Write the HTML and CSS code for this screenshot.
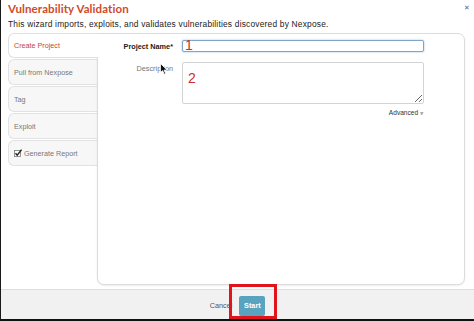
FILE: index.html
```html
<!DOCTYPE html>
<html lang="en">
<head>
<meta charset="UTF-8">
<meta name="viewport" content="width=device-width, initial-scale=1.0">
<title>Vulnerability Validation</title>
<link rel="stylesheet" href="styles.css">
</head>
<body>
    <div class="dialog">
        <div class="header">
            <h1 class="title">Vulnerability Validation</h1>
            <span class="close">&#x2715;</span>
            <p class="subtitle">This wizard imports, exploits, and validates vulnerabilities discovered by Nexpose.</p>
        </div>

        <div class="wizard">
            <ul class="steps">
                <li class="step active">Create Project</li>
                <li class="step">Pull from Nexpose</li>
                <li class="step">Tag</li>
                <li class="step">Exploit</li>
                <li class="step">
                    <svg class="check" width="8" height="8" viewBox="0 0 8 8">
                        <rect x="0.5" y="1.5" width="6" height="6" fill="#fff" stroke="#777" stroke-width="0.8"/>
                        <path d="M1.5 4.2 L3.2 6.2 L7.6 0.6" fill="none" stroke="#222" stroke-width="1.4"/>
                    </svg>Generate Report
                </li>
            </ul>
            <div class="panel">
                <form class="form">
                    <div class="row">
                        <label class="label strong" for="name">Project Name*</label>
                        <input class="field focus" type="text" id="name">
                    </div>
                    <div class="row">
                        <label class="label" for="desc">Description</label>
                        <textarea class="field area" id="desc"></textarea>
                    </div>
                    <div class="advanced">Advanced <span class="chev">&#x2A54;</span></div>
                </form>
            </div>
        </div>

        <div class="footer">
            <span class="cancel">Cancel</span>
            <button class="start" type="button">Start</button>
        </div>

        <!-- annotations drawn on top of the screenshot -->
        <span class="mark mark1">1</span>
        <span class="mark mark2">2</span>
        <svg class="cursor" width="8" height="12" viewBox="0 0 8 12">
            <path d="M0.5 0.5 L0.5 9.5 L2.6 7.6 L4.2 11.2 L5.6 10.6 L4 7.1 L7 7.1 Z" fill="#111" stroke="#fff" stroke-width="0.8"/>
        </svg>
        <span class="highlight"></span>
    </div>
</body>
</html>
```

FILE: styles.css
```css
* {
    box-sizing: border-box;
}
body {
    margin: 0;
    padding: 0;
    background-color: #fff;
    font-family: "Liberation Sans", Arial, sans-serif;
}
.dialog {
    position: relative;
    width: 474px;
    height: 321px;
    display: flex;
    flex-direction: column;
    background-color: #fff;
    border-left: 1px solid #1a1a1a;
    border-bottom: 2px solid #111;
    overflow: hidden;
}
.header {
    position: relative;
    height: 33px;
    padding: 2px 7px 0;
}
.title {
    margin: 0;
    font-family: Lato, "Liberation Sans", sans-serif;
    font-size: 11.5px;
    font-weight: 700;
    color: #cf4a2c;
    letter-spacing: 0.1px;
}
.close {
    position: absolute;
    top: 4px;
    right: 4px;
    font-size: 7px;
    color: #666;
}
.subtitle {
    margin: 4px 0 0;
    font-size: 8.4px;
    color: #222;
    letter-spacing: 0.2px;
}
.wizard {
    display: flex;
    height: 252px;
    padding: 0 10px 0 7px;
}
.steps {
    list-style: none;
    margin: 0;
    padding: 0;
    width: 89px;
    flex-shrink: 0;
}
.step {
    height: 26px;
    margin-bottom: 1px;
    padding-left: 5px;
    display: flex;
    align-items: center;
    font-size: 7.2px;
    color: #777;
    background-color: #f7f7f7;
    border: 1px solid #e2e2e2;
    border-right: none;
    border-radius: 6px 0 0 6px;
}
.step.active {
    height: 25px;
    color: #c9452f;
    background-color: #fff;
    border-color: #e0e0e0;
    position: relative;
    z-index: 1;
    margin-right: -1px;
}
.check {
    margin-right: 2px;
}
.panel {
    flex: 1;
    background-color: #fff;
    border: 1px solid #dcdcdc;
    border-radius: 0 7px 7px 7px;
    box-shadow: 0 1px 2px rgba(0, 0, 0, 0.08);
}
.form {
    padding: 6px 40px 0 0;
}
.row {
    display: flex;
    align-items: flex-start;
    margin-bottom: 10px;
}
.label {
    width: 75px;
    flex-shrink: 0;
    text-align: right;
    padding-top: 2px;
    font-size: 7.3px;
    color: #777;
}
.label.strong {
    font-weight: 700;
    color: #222;
}
.field {
    margin-left: 9px;
    width: 242px;
    border: 1px solid #c9c9c9;
    border-radius: 2px;
    font-family: inherit;
    font-size: 8px;
    background-color: #fff;
}
.field.focus {
    height: 12px;
    border-color: #7ea6cc;
    box-shadow: 0 0 2px rgba(80, 140, 200, 0.6);
    outline: none;
}
.field.area {
    height: 42px;
    resize: vertical;
    border-color: #d4d4d4;
}
.advanced {
    margin-top: -5px;
    padding-right: 1px;
    text-align: right;
    font-size: 6.6px;
    color: #333;
}
.chev {
    font-size: 6px;
    color: #666;
}
.footer {
    margin-top: 4px;
    flex: 1;
    display: flex;
    justify-content: center;
    align-items: center;
    gap: 7px;
    padding-top: 2px;
    background-color: #f1f1f1;
    border-top: 1px solid #dedede;
}
.cancel {
    font-size: 7.3px;
    color: #555;
}
.start {
    width: 26px;
    height: 20px;
    padding: 0;
    border: none;
    border-radius: 2px;
    background-color: #5aa3bf;
    color: #fff;
    font-family: inherit;
    font-weight: 700;
    font-size: 7.3px;
}
.mark {
    position: absolute;
    font-size: 14px;
    color: #c93030;
    line-height: 1;
}
.mark1 {
    left: 184px;
    top: 38px;
}
.mark2 {
    left: 187px;
    top: 71px;
}
.cursor {
    position: absolute;
    left: 159px;
    top: 63px;
}
.highlight {
    position: absolute;
    left: 228px;
    top: 284px;
    width: 48px;
    height: 35px;
    border: 3px solid #e0141a;
}
```
